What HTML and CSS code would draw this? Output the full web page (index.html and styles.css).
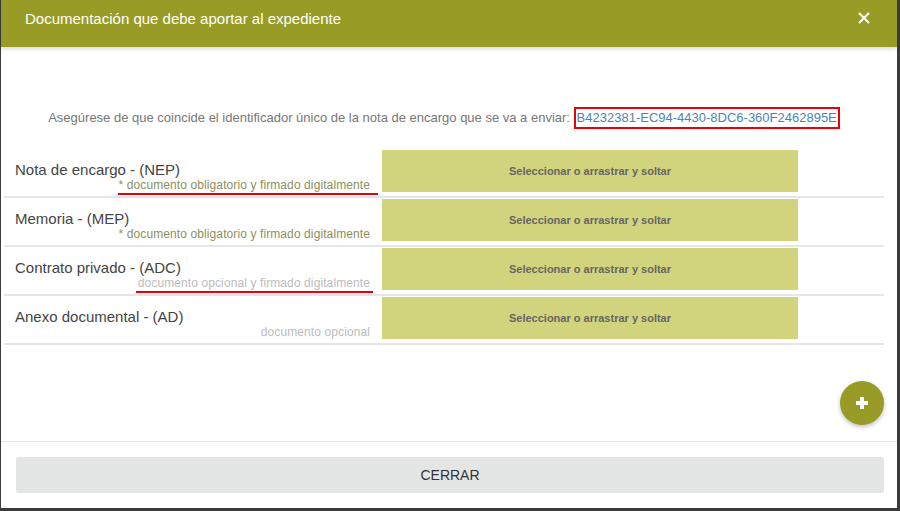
FILE: index.html
```html
<!DOCTYPE html>
<html lang="es">
<head>
  <meta charset="UTF-8">
  <meta name="viewport" content="width=device-width, initial-scale=1.0">
  <title>Documentación que debe aportar al expediente</title>
  <link rel="stylesheet" href="styles.css">
</head>
<body>
  <div class="modal">
    <div class="modal-header">
      <h1>Documentación que debe aportar al expediente</h1>
      <button class="close-btn" aria-label="Cerrar">
        <svg width="12" height="12" viewBox="0 0 12 12"><path d="M1 1 L11 11 M11 1 L1 11" stroke="#fff" stroke-width="2" fill="none"/></svg>
      </button>
    </div>

    <div class="modal-body">
      <p class="notice">Asegúrese de que coincide el identificador único de la nota de encargo que se va a enviar: <span class="uid">B4232381-EC94-4430-8DC6-360F2462895E</span></p>

      <div class="doc-list">
        <div class="doc-row">
          <div class="doc-info">
            <div class="doc-name">Nota de encargo - (NEP)</div>
            <div class="doc-hint required"><span class="marked mark-wide">* documento obligatorio y firmado digitalmente</span></div>
          </div>
          <div class="drop-zone">Seleccionar o arrastrar y soltar</div>
        </div>
        <div class="doc-row">
          <div class="doc-info">
            <div class="doc-name">Memoria - (MEP)</div>
            <div class="doc-hint required">* documento obligatorio y firmado digitalmente</div>
          </div>
          <div class="drop-zone">Seleccionar o arrastrar y soltar</div>
        </div>
        <div class="doc-row">
          <div class="doc-info">
            <div class="doc-name">Contrato privado - (ADC)</div>
            <div class="doc-hint optional"><span class="marked">documento opcional y firmado digitalmente</span></div>
          </div>
          <div class="drop-zone">Seleccionar o arrastrar y soltar</div>
        </div>
        <div class="doc-row">
          <div class="doc-info">
            <div class="doc-name">Anexo documental - (AD)</div>
            <div class="doc-hint optional">documento opcional</div>
          </div>
          <div class="drop-zone">Seleccionar o arrastrar y soltar</div>
        </div>
      </div>

      <div class="add-row">
        <button class="fab" aria-label="Añadir">
          <svg width="16" height="16" viewBox="0 0 16 16"><path d="M8 2 V14 M2 8 H14" stroke="#fff" stroke-width="4" fill="none"/></svg>
        </button>
      </div>
    </div>

    <div class="modal-footer">
      <button class="btn-close">CERRAR</button>
    </div>
  </div>
</body>
</html>
```

FILE: styles.css
```css
html, body {
  margin: 0;
  padding: 0;
}
body {
  background-color: #3b3b3b;
  font-family: "Liberation Sans", Arial, sans-serif;
  height: 511px;
  overflow: hidden;
}
.modal {
  margin-left: 1px;
  width: 896px;
  height: 508px;
  background: #fff;
  display: flex;
  flex-direction: column;
}
.modal-header {
  height: 47px;
  background-color: #989c27;
  box-shadow: 0 2px 4px rgba(0, 0, 0, 0.15);
  display: flex;
  align-items: flex-start;
  justify-content: space-between;
  padding: 0 27px 0 24px;
  position: relative;
  z-index: 1;
}
.modal-header h1 {
  margin: 10px 0 0;
  font-size: 15px;
  font-weight: normal;
  color: #fff;
  line-height: 18px;
}
.close-btn {
  margin-top: 12px;
  padding: 0;
  border: none;
  background: none;
  width: 12px;
  height: 12px;
  cursor: pointer;
  display: flex;
}
.modal-body {
  flex: 1;
  padding: 0 13px 0 3px;
}
.notice {
  margin: 60px 0 0;
  text-align: center;
  font-size: 13px;
  line-height: 22px;
  color: #777;
}
.uid {
  display: inline-block;
  color: #4a86b4;
  border: 2px solid #e8000b;
  padding: 0 1px;
  line-height: 18px;
}
.doc-list {
  margin-top: 20px;
}
.doc-row {
  display: flex;
  padding: 1px 0 4px;
  border-bottom: 2px solid #e6e6e6;
}
.doc-info {
  width: 378px;
  padding: 11px 12px 0 11px;
  box-sizing: border-box;
}
.doc-name {
  font-size: 15px;
  line-height: 17px;
  color: #444;
}
.doc-hint {
  text-align: right;
  font-size: 12px;
  line-height: 14px;
  letter-spacing: 0.1px;
}
.required {
  color: #8c8f5c;
}
.optional {
  color: #bcbcbc;
}
.marked {
  position: relative;
}
.marked::after {
  content: "";
  position: absolute;
  left: -2px;
  right: -3px;
  bottom: -3px;
  height: 2px;
  background: #e8000b;
}
.mark-wide::after {
  left: -1px;
  right: -8px;
}
.drop-zone {
  width: 416px;
  height: 42px;
  background-color: #d2d37d;
  color: #666;
  font-size: 11px;
  font-weight: bold;
  display: flex;
  align-items: center;
  justify-content: center;
}
.add-row {
  display: flex;
  justify-content: flex-end;
  margin-top: 36px;
}
.fab {
  width: 44px;
  height: 44px;
  border-radius: 50%;
  border: none;
  padding: 0;
  background-color: #989c27;
  box-shadow: 0 2px 4px rgba(0, 0, 0, 0.25);
  display: flex;
  align-items: center;
  justify-content: center;
  cursor: pointer;
}
.modal-footer {
  border-top: 1px solid #e5e5e5;
  padding: 15px 13px 15px 15px;
}
.btn-close {
  display: block;
  width: 100%;
  height: 36px;
  border: none;
  border-radius: 2px;
  background-color: #e4e5e5;
  color: #333;
  font-family: "Liberation Sans", Arial, sans-serif;
  font-size: 14px;
  cursor: pointer;
}
```
